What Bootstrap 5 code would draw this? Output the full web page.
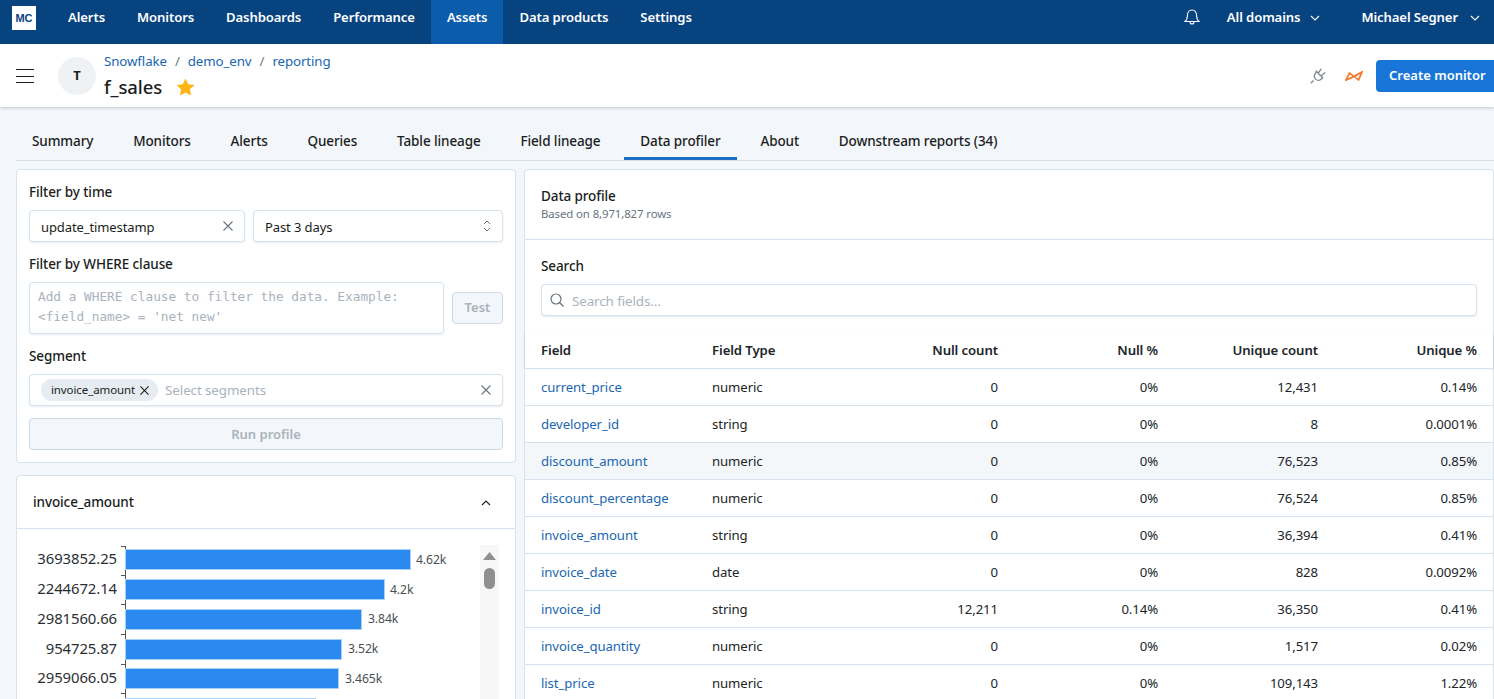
<!doctype html>
<html lang="en">
<head>
<meta charset="utf-8">
<title>f_sales</title>
<link rel="stylesheet" href="https://cdn.jsdelivr.net/npm/bootstrap@5.3.0/dist/css/bootstrap.min.css">
<style>
html,body{height:100%;overflow:hidden}
body{font-family:"Noto Sans","Open Sans",sans-serif;font-size:13px;background:#f3f6fa;color:#1a1d21;letter-spacing:-.1px}
.top-bar{height:44px;background:#07437f;padding:0 0 0 12px}
.logo-box{width:24px;height:24px;background:#fff;color:#07437f;font:700 11px "Liberation Sans",sans-serif;margin:0 16px 8px 0;letter-spacing:0}
.top-link{color:#fff;font-weight:600;font-size:13.100px;padding:0 16px 8px;height:44px;display:flex;align-items:center;text-decoration:none}
.top-link.is-on{background:#0b5cab}
.user-item{color:#fff;font-weight:600;font-size:13.100px}
.top-right{margin:0 14px 8px auto}
.top-bell{margin-right:27px}
.chev-a{margin:0 41px 0 10px}
.chev-b{margin-left:12px}
.head-bar{height:63px;background:#fff;box-shadow:0 1px 3px rgba(40,60,90,.25);padding:0 0 0 16px;position:relative}
.burger{width:18px;height:14px;margin-right:24px}
.avatar{width:38px;height:38px;border-radius:50%;background:#eff2f5;font-weight:700;font-size:13px;margin-right:8px}
.name-block{margin-bottom:2px}
.crumbs a{color:#1a67b0;text-decoration:none}
.crumbs{font-size:13.300px;line-height:20px;color:#6b7785}
.crumb-gap{margin:0 8px}
.title-row{margin-top:4px}
.page-name{font-size:18.500px;font-weight:500;line-height:24px;margin:0}
.star-icon{margin-left:14px}
.plug-icon{margin-right:19px}
.create-btn{background:#1976d8;color:#fff;font-weight:600;font-size:13px;border:0;border-radius:4px 0 0 4px;height:32px;width:118px;padding:0 0 0 13px;margin-left:13px;text-align:left}
.tab-row{margin:15px 0 0 16px;height:39px;border-bottom:1px solid #d3e0ec}
.tab-item{padding:0 16px;height:38px;line-height:38px;font-weight:500;font-size:13.500px;margin-right:7.800px;color:#1a1d21}
.tab-item.is-on{border-bottom:3px solid #1a6fc4}
.work-area{padding:8px 0 0 16px;gap:8px}
.left-col{width:500px;flex:none}
.right-col{flex:1;min-width:0}
.pane{background:#fff;border:1px solid #d6e2ee;border-radius:4px}
.filter-pane{height:294px;padding:12px}
.field-title{font-weight:500;font-size:13.500px;line-height:20px;margin-bottom:8px}
.box{border:1px solid #d6e2ee;border-radius:4px;height:32px;background:#fff;box-shadow:0 1px 2px rgba(40,60,90,.1);padding:0 11px}
.box-text{padding-top:3px}
.where-box{height:52px;width:415px;padding:4px 8px;font:12.750px/20px "DejaVu Sans Mono",monospace;color:#a9b3bd;letter-spacing:0;white-space:pre-line}
.ghost-btn{width:51px;height:32px;background:#f3f6fa;border:1px solid #cbd8e4;border-radius:4px;color:#a9b3bd;font-weight:600;padding:0}
.ghost-wide{width:100%;margin-top:12px;padding-top:2px}
.stack-gap{margin-bottom:12px}
.chip{background:#e6ecf2;border-radius:11px;height:22px;padding:0 9px 0 10px;font-size:11.500px;margin-right:7px}
.chip-x{margin-left:5px}
.hint{color:#a9b3bd;font-size:13.400px}
.chart-pane{margin-top:12px;height:260px}
.pane-head{height:53px;padding:1px 24px 0 16px;border-bottom:1px solid #d6e2ee;font-weight:500;font-size:13.500px}
.profile-head{height:70px;padding:16px 16px 0;border-bottom:1px solid #d6e2ee}
.profile-title{font-weight:500;font-size:13.500px;line-height:20px}
.profile-sub{font-size:11.400px;color:#68737f;line-height:16px}
.search-part{padding:16px 16px 0}
.data-table{margin:15px 0 0;--bs-table-bg:transparent;table-layout:fixed;width:100%}
.data-table th,.data-table td{height:37px;padding:2px 16px 0;vertical-align:middle;border-bottom:1px solid #d6e2ee;font-size:13.200px}
.data-table th{font-weight:600;height:37px;padding-top:4px}
.data-table thead{box-shadow:0 1px 2px rgba(40,60,90,.12)}
.data-table td a{color:#1a67b0;text-decoration:none}
.data-table tr.is-hover td{background:#f4f7fa}
.chart-svg{display:block;font-family:"Noto Sans",sans-serif}
</style>
</head>
<body>
<nav class="top-bar d-flex align-items-center">
  <div class="logo-box d-flex align-items-center justify-content-center">MC</div>
  <a class="top-link" href="#">Alerts</a>
  <a class="top-link" href="#">Monitors</a>
  <a class="top-link" href="#">Dashboards</a>
  <a class="top-link" href="#">Performance</a>
  <a class="top-link is-on" href="#">Assets</a>
  <a class="top-link" href="#">Data products</a>
  <a class="top-link" href="#">Settings</a>
  <div class="top-right d-flex align-items-center">
    <svg class="top-bell" width="16" height="17" viewBox="0 0 16 17" fill="none" stroke="#fff" stroke-width="1.100"><path d="M8 1C5 1 3.500 3.300 3.500 6c0 3-.8 5-2.500 6.500h14C13.300 11 12.500 9 12.500 6 12.500 3.300 11 1 8 1z"/><path d="M6 13a2 2 0 0 0 4 0"/></svg>
    <span class="user-item">All domains</span>
    <svg class="chev-a" width="10" height="6" viewBox="0 0 10 6" fill="none" stroke="#fff" stroke-width="1.100"><path d="M1 1l4 4 4-4"/></svg>
    <span class="user-item">Michael Segner</span>
    <svg class="chev-b" width="10" height="6" viewBox="0 0 10 6" fill="none" stroke="#fff" stroke-width="1.100"><path d="M1 1l4 4 4-4"/></svg>
  </div>
</nav>
<header class="head-bar d-flex align-items-center">
  <svg class="burger" viewBox="0 0 18 14" stroke="#1a1d21" stroke-width="1"><path d="M0 .5h18M0 7.500h18M0 13.500h18"/></svg>
  <div class="avatar d-flex align-items-center justify-content-center">T</div>
  <div class="name-block">
    <div class="crumbs"><a href="#">Snowflake</a><span class="crumb-gap">/</span><a href="#">demo_env</a><span class="crumb-gap">/</span><a href="#">reporting</a></div>
    <div class="title-row d-flex align-items-center">
      <h1 class="page-name">f_sales</h1>
      <svg class="star-icon" width="19" height="18" viewBox="0 0 20 19" fill="#fdb515"><path d="M10 .5l2.900 6 6.600.9-4.800 4.600 1.200 6.500-5.900-3.200-5.900 3.200 1.200-6.500L.5 7.400l6.600-.9z"/></svg>
    </div>
  </div>
  <div class="ms-auto d-flex align-items-center">
    <svg class="plug-icon" width="16" height="16" viewBox="0 0 16 16" fill="none" stroke="#7b8794" stroke-width="1.300"><path d="M.8 15.200l2.700-2.700M6.300 3.300l6.400 6.400-1.300 1.300c-1.700 1.700-4.300 1.700-5.900.1s-1.600-4.200.1-5.900zM8.500 4.500L11.500.800M11.500 7.500l3.700-3"/></svg>
    <svg width="18" height="10" viewBox="0 0 18 10" fill="none" stroke="#f47b30" stroke-width="1.500"><path d="M1 9l3.500-7L9 5.500 17 1l-3.500 8L9 5.500z"/><path d="M4.500 2L1 9l8-3.500M13.500 9L17 1 9 5.500"/></svg>
    <button class="create-btn">Create monitor</button>
  </div>
</header>
<div class="tab-row d-flex">
  <div class="tab-item">Summary</div>
  <div class="tab-item">Monitors</div>
  <div class="tab-item">Alerts</div>
  <div class="tab-item">Queries</div>
  <div class="tab-item">Table lineage</div>
  <div class="tab-item">Field lineage</div>
  <div class="tab-item is-on">Data profiler</div>
  <div class="tab-item">About</div>
  <div class="tab-item">Downstream reports (34)</div>
</div>
<main class="work-area d-flex align-items-start">
  <div class="left-col">
    <section class="pane filter-pane">
      <div class="field-title">Filter by time</div>
      <div class="d-flex gap-2 stack-gap">
        <div class="box d-flex align-items-center" style="width:216px"><span class="box-text flex-grow-1">update_timestamp</span>
          <svg width="10" height="10" viewBox="0 0 10 10" stroke="#68737f" stroke-width="1.100"><path d="M.5.5l9 9M9.500.500l-9 9"/></svg></div>
        <div class="box d-flex align-items-center flex-grow-1"><span class="box-text flex-grow-1">Past 3 days</span>
          <svg width="8" height="12" viewBox="0 0 8 12" fill="none" stroke="#68737f"><path d="M1 4l3-3 3 3M1 8l3 3 3-3"/></svg></div>
      </div>
      <div class="field-title">Filter by WHERE clause</div>
      <div class="d-flex align-items-center gap-2 stack-gap">
        <div class="box where-box">Add a WHERE clause to filter the data. Example:
&lt;field_name&gt; = 'net new'</div>
        <button class="ghost-btn">Test</button>
      </div>
      <div class="field-title">Segment</div>
      <div class="box d-flex align-items-center">
        <span class="chip d-flex align-items-center">invoice_amount<svg class="chip-x" width="9" height="9" viewBox="0 0 10 10" stroke="#1a1d21" stroke-width="1.200"><path d="M.5.5l9 9M9.500.500l-9 9"/></svg></span>
        <span class="hint flex-grow-1">Select segments</span>
        <svg width="10" height="10" viewBox="0 0 10 10" stroke="#68737f" stroke-width="1.100"><path d="M.5.5l9 9M9.500.500l-9 9"/></svg>
      </div>
      <button class="ghost-btn ghost-wide">Run profile</button>
    </section>
    <section class="pane chart-pane">
      <div class="pane-head d-flex align-items-center justify-content-between"><span>invoice_amount</span>
        <svg width="10" height="6" viewBox="0 0 10 6" fill="none" stroke="#1a1d21" stroke-width="1.100"><path d="M1 5l4-4 4 4"/></svg></div>
      <svg class="chart-svg" width="498" height="170" viewBox="0 0 498 170">
        <path d="M108.500 17v160M104 17.500h4M104 46.500h4M104 75.500h4M104 105.500h4M104 135.500h4M104 164.500h4" stroke="#555" fill="none"/>
        <g fill="#2a8af0" stroke="#a9d0f7">
          <rect x="108.500" y="20.500" width="285" height="20"/>
          <rect x="108.500" y="50.500" width="259" height="20"/>
          <rect x="108.500" y="80.500" width="236" height="20"/>
          <rect x="108.500" y="110.500" width="216" height="20"/>
          <rect x="108.500" y="139.500" width="213" height="20"/>
          <rect x="108.500" y="169.500" width="190" height="20"/>
        </g>
        <g font-size="14.900" fill="#2b2f33" text-anchor="end">
          <text x="100" y="35">3693852.25</text><text x="100" y="65">2244672.14</text><text x="100" y="95">2981560.66</text><text x="100" y="125">954725.87</text><text x="100" y="154">2959066.05</text>
        </g>
        <g font-size="12.200" fill="#4a4f55">
          <text x="399" y="35">4.62k</text><text x="373" y="65">4.2k</text><text x="351" y="94">3.84k</text><text x="331" y="124">3.52k</text><text x="328" y="154">3.465k</text>
        </g>
        <rect x="463" y="16" width="19" height="160" fill="#f7f7f7"/>
        <path d="M472.500 23l6.500 8h-13z" fill="#8f8f8f"/>
        <rect x="467" y="39" width="11" height="21" rx="5.500" fill="#8f8f8f"/>
      </svg>
    </section>
  </div>
  <section class="pane right-col">
    <div class="profile-head">
      <div class="profile-title">Data profile</div>
      <div class="profile-sub">Based on 8,971,827 rows</div>
    </div>
    <div class="search-part">
      <div class="field-title">Search</div>
      <div class="box d-flex align-items-center" style="padding:0 8px">
        <svg width="14" height="14" viewBox="0 0 14 14" fill="none" stroke="#68737f" stroke-width="1.200"><circle cx="6" cy="6" r="5"/><path d="M9.500 9.500l4 4"/></svg>
        <span class="hint box-text ms-2">Search fields...</span>
      </div>
    </div>
    <table class="table data-table">
      <colgroup><col style="width:171px"><col style="width:152px"><col style="width:166px"><col style="width:160px"><col style="width:160px"><col></colgroup>
      <thead><tr><th>Field</th><th>Field Type</th><th class="text-end">Null count</th><th class="text-end">Null %</th><th class="text-end">Unique count</th><th class="text-end">Unique %</th></tr></thead>
      <tbody>
        <tr><td><a href="#">current_price</a></td><td>numeric</td><td class="text-end">0</td><td class="text-end">0%</td><td class="text-end">12,431</td><td class="text-end">0.14%</td></tr>
        <tr><td><a href="#">developer_id</a></td><td>string</td><td class="text-end">0</td><td class="text-end">0%</td><td class="text-end">8</td><td class="text-end">0.0001%</td></tr>
        <tr class="is-hover"><td><a href="#">discount_amount</a></td><td>numeric</td><td class="text-end">0</td><td class="text-end">0%</td><td class="text-end">76,523</td><td class="text-end">0.85%</td></tr>
        <tr><td><a href="#">discount_percentage</a></td><td>numeric</td><td class="text-end">0</td><td class="text-end">0%</td><td class="text-end">76,524</td><td class="text-end">0.85%</td></tr>
        <tr><td><a href="#">invoice_amount</a></td><td>string</td><td class="text-end">0</td><td class="text-end">0%</td><td class="text-end">36,394</td><td class="text-end">0.41%</td></tr>
        <tr><td><a href="#">invoice_date</a></td><td>date</td><td class="text-end">0</td><td class="text-end">0%</td><td class="text-end">828</td><td class="text-end">0.0092%</td></tr>
        <tr><td><a href="#">invoice_id</a></td><td>string</td><td class="text-end">12,211</td><td class="text-end">0.14%</td><td class="text-end">36,350</td><td class="text-end">0.41%</td></tr>
        <tr><td><a href="#">invoice_quantity</a></td><td>numeric</td><td class="text-end">0</td><td class="text-end">0%</td><td class="text-end">1,517</td><td class="text-end">0.02%</td></tr>
        <tr><td><a href="#">list_price</a></td><td>numeric</td><td class="text-end">0</td><td class="text-end">0%</td><td class="text-end">109,143</td><td class="text-end">1.22%</td></tr>
      </tbody>
    </table>
  </section>
</main>
<script src="https://cdn.jsdelivr.net/npm/bootstrap@5.3.0/dist/js/bootstrap.bundle.min.js"></script>
</body>
</html>
